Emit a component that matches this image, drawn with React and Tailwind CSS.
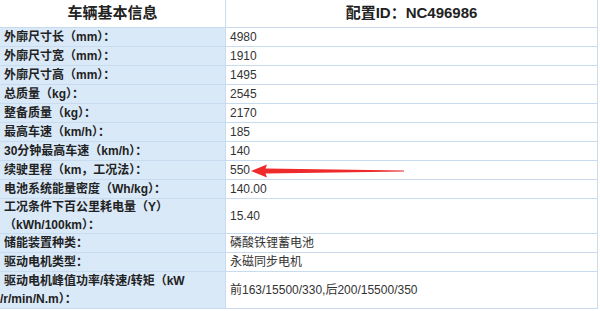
import React from 'react';

const rows = [
  { label: '外廓尺寸长（mm）：', value: '4980' },
  { label: '外廓尺寸宽（mm）：', value: '1910' },
  { label: '外廓尺寸高（mm）：', value: '1495' },
  { label: '总质量（kg）：', value: '2545' },
  { label: '整备质量（kg）：', value: '2170' },
  { label: '最高车速（km/h）：', value: '185' },
  { label: '30分钟最高车速（km/h）：', value: '140' },
  { label: '续驶里程（km，工况法）：', value: '550' },
  { label: '电池系统能量密度（Wh/kg）：', value: '140.00' },
  { label: ['工况条件下百公里耗电量（Y）', '（kWh/100km）：'], value: '15.40', h: 'h-[35px]' },
  { label: '储能装置种类：', value: '磷酸铁锂蓄电池' },
  { label: '驱动电机类型：', value: '永磁同步电机' },
  { label: ['驱动电机峰值功率/转速/转矩（kW', '/r/min/N.m）：'], value: '前163/15500/330,后200/15500/350', h: 'h-[37px]', shift: true },
];

const Arrow = () => (
  <svg className="absolute left-[250px] top-[163px]" width="160" height="16" viewBox="0 0 160 16">
    <path d="M1 8 L17 1.5 L15.5 5.5 L154 7.6 L154 8.4 L15.5 10.5 L17 14.5 Z" fill="#ee2a2a" />
  </svg>
);

export default function App() {
  return (
    <div className="relative w-[600px] h-[311px] bg-white overflow-hidden" style={{ fontFamily: '"Liberation Sans", "Noto Sans CJK SC", sans-serif' }}>
      <div className="w-[598px]">
        <div className="flex h-[28px] border-b border-[#c9dcef]">
          <div className="w-[226px] border-r border-[#c9dcef] flex items-center justify-center text-[15px] font-bold text-[#222]">
            车辆基本信息
          </div>
          <div className="flex-1 border-r border-[#c9dcef] flex items-center justify-center text-[15px] font-bold text-[#222]">
            配置ID：NC496986
          </div>
        </div>
        {rows.map((r, i) => (
          <div key={i} className={`flex border-b border-[#c9dcef] ${r.h || 'h-[19px]'}`}>
            <div className="w-[226px] border-r border-[#c9dcef] bg-[#d9e9f8] flex flex-col justify-center pl-[4px] text-[12px] font-bold text-[#222] leading-[18px] whitespace-nowrap">
              {Array.isArray(r.label) ? (
                <>
                  <span>{r.label[0]}</span>
                  <span className={r.shift ? '-ml-[4px]' : ''}>{r.label[1]}</span>
                </>
              ) : (
                r.label
              )}
            </div>
            <div className="flex-1 border-r border-[#c9dcef] flex items-center pl-[4px] text-[12px] text-[#333]">
              {r.value}
            </div>
          </div>
        ))}
      </div>
      <Arrow />
    </div>
  );
}
